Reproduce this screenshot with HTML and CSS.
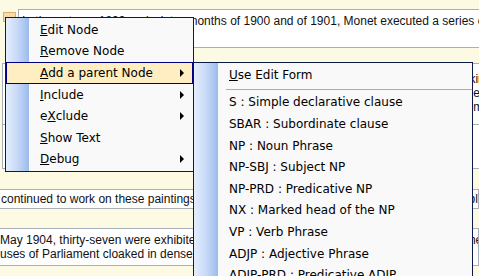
FILE: index.html
```html
<!DOCTYPE html>
<html lang="en">
<head>
    <meta charset="UTF-8">
    <title>Tree Editor - Context Menu</title>
    <link rel="stylesheet" href="styles.css">
</head>
<body>
    <div class="doc">
        <div class="node-row">
            <span class="node-icon"></span>
            <div class="box box-first">
                <div class="line">In the autumn 1899 and winter months of 1900 and of 1901, Monet executed a series of paintings of the Thames</div>
            </div>
        </div>
        <div class="box box-second">
            <div class="box-top">
                <div class="line">From his room at the Savoy Hotel he painted views of the river, the Waterloo Bridge looking</div>
                <div class="line">and the Charing Cross Bridge, while from a terrace of St Thomas' Hospital he painted the Houses of</div>
                <div class="line">Parliament in changing light, fog and sunset, working on many canvases at once and sometimes present</div>
            </div>
            <div class="line line-low">After returning to Giverny he finished the series in his studio, which he then began to</div>
        </div>
        <div class="box box-third">
            <div class="line">continued to work on these paintings for several years before they were shown to the public</div>
        </div>
        <div class="box box-fourth">
            <div class="line">May 1904, thirty-seven were exhibited at the Durand-Ruel gallery in Paris, among them the</div>
            <div class="line">uses of Parliament cloaked in dense fog with the sun breaking through the haze like</div>
        </div>
    </div>

    <div class="menu menu-main">
        <div class="menu-item"><u>E</u>dit Node</div>
        <div class="menu-item"><u>R</u>emove Node</div>
        <div class="menu-item active"><u>A</u>dd a parent Node<span class="arrow"></span></div>
        <div class="menu-item"><u>I</u>nclude<span class="arrow"></span></div>
        <div class="menu-item">e<u>X</u>clude<span class="arrow"></span></div>
        <div class="menu-item"><u>S</u>how Text</div>
        <div class="menu-item"><u>D</u>ebug<span class="arrow"></span></div>
    </div>

    <div class="menu menu-sub">
        <div class="menu-item"><u>U</u>se Edit Form</div>
        <div class="menu-sep"></div>
        <div class="menu-item">S : Simple declarative clause</div>
        <div class="menu-item">SBAR : Subordinate clause</div>
        <div class="menu-item">NP : Noun Phrase</div>
        <div class="menu-item">NP-SBJ : Subject NP</div>
        <div class="menu-item">NP-PRD : Predicative NP</div>
        <div class="menu-item">NX : Marked head of the NP</div>
        <div class="menu-item">VP : Verb Phrase</div>
        <div class="menu-item">ADJP : Adjective Phrase</div>
        <div class="menu-item">ADJP-PRD : Predicative ADJP</div>
    </div>
</body>
</html>
```

FILE: styles.css
```css
body {
    margin: 0;
    width: 479px;
    height: 276px;
    overflow: hidden;
    background: #fdfae4;
    font-family: "Liberation Sans", Arial, sans-serif;
    font-size: 12px;
    color: #111;
    position: relative;
}
.doc {
    padding-top: 9px;
}
.node-row {
    display: flex;
    align-items: flex-start;
}
.node-icon {
    width: 11px;
    height: 8px;
    margin: 3px 2px 0 3px;
    background: #f8dbab;
    border: 1px solid #dcae6a;
}
.box {
    background: #fff;
    border: 1px solid #a7b0ba;
    white-space: nowrap;
    overflow: hidden;
}
.line {
    height: 14px;
    line-height: 14px;
}
.box-first {
    flex: 1;
    height: 33px;
    padding: 4px 0 0 3px;
    border-right: none;
}
.box-second {
    margin: 15px 0 0 2px;
    height: 104px;
    border-right: none;
}
.box-top {
    height: 52px;
    padding: 8px 0 0 4px;
    border-bottom: 1px solid #a7b0ba;
}
.line-low {
    padding: 9px 0 0 4px;
}
.box-third {
    margin: 20px 0 0 -2px;
    padding: 2px 0 2px 2px;
}
.box-fourth {
    margin: 19px 0 0 -2px;
    padding: 4px 0 4px 1px;
}

/* context menus */
.menu {
    position: absolute;
    border: 1px solid #0c1a48;
    padding-top: 1px;
    font-family: "DejaVu Sans", Verdana, sans-serif;
    font-size: 12px;
    color: #000;
}
.menu-main {
    left: 5px;
    top: 17px;
    width: 187px;
    padding-bottom: 1px;
    background: linear-gradient(to right, #e4eefd 0, #c8daf8 11px, #a3c0ee 21px, #9ab8ea 23px, #f9f9f9 23px);
}
.menu-sub {
    left: 193px;
    top: 62px;
    width: 278px;
    height: 240px;
    background: linear-gradient(to right, #e4eefd 0, #c8daf8 12px, #a3c0ee 22px, #9ab8ea 24px, #f9f9f9 24px);
}
.menu-item {
    display: flex;
    align-items: center;
    height: 21.6px;
    padding: 0 9px 0 34px;
    white-space: nowrap;
}
.menu-sub .menu-item {
    padding-left: 35px;
}
.menu-item.active {
    background: #ffeec2;
    box-shadow: inset 0 0 0 1px #000080;
}
.arrow {
    margin-left: auto;
    width: 0;
    height: 0;
    border-left: 4px solid #000;
    border-top: 4px solid transparent;
    border-bottom: 4px solid transparent;
}
.menu-sep {
    height: 0;
    margin: 3px 0 2px 32px;
    border-top: 1px solid #a0aec4;
}
```
